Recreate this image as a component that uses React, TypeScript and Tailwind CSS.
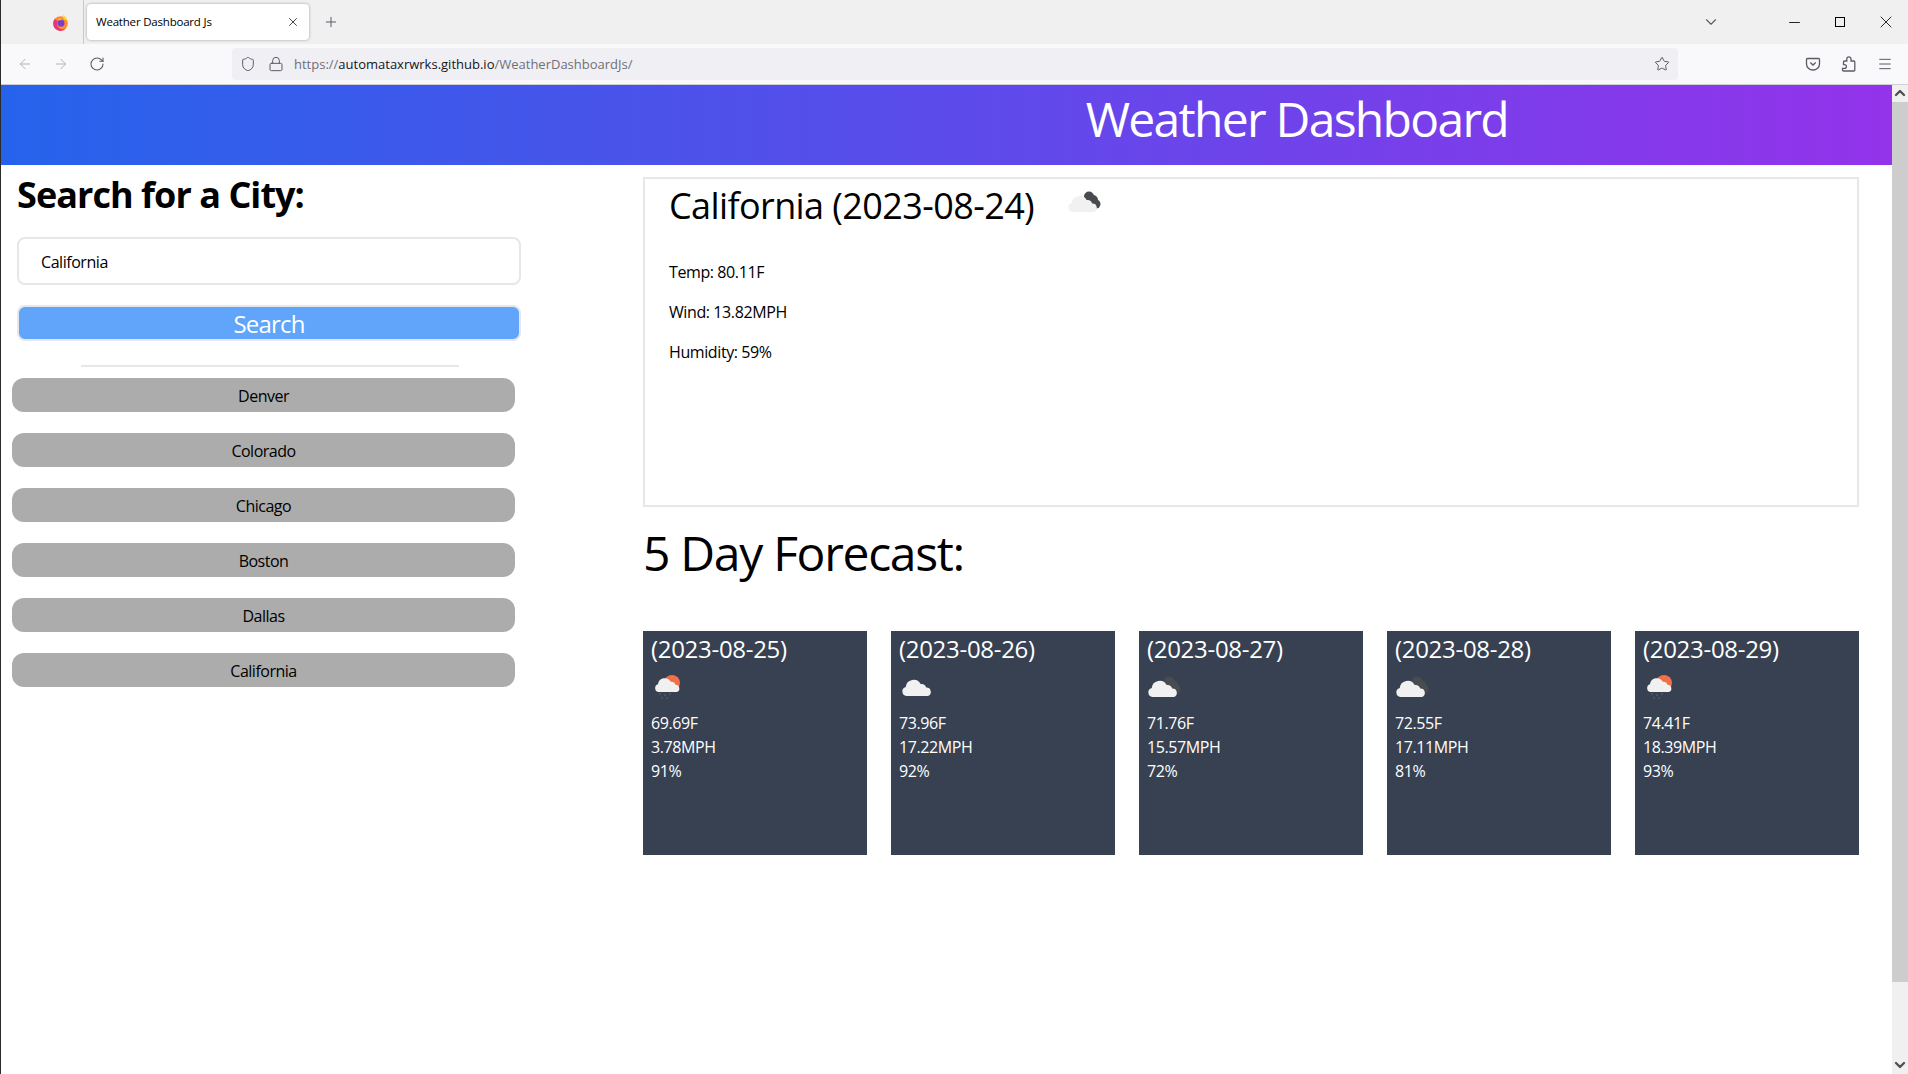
import { ArrowLeft, ArrowRight, RotateCw, Shield, Lock, Star, Menu, Plus, X, ChevronDown, ChevronUp, Minus } from "lucide-react";

const cities = ["Denver", "Colorado", "Chicago", "Boston", "Dallas", "California"];

const forecast = [
  { date: "(2023-08-25)", temp: "69.69F", wind: "3.78MPH", humidity: "91%", icon: "rain" },
  { date: "(2023-08-26)", temp: "73.96F", wind: "17.22MPH", humidity: "92%", icon: "cloud" },
  { date: "(2023-08-27)", temp: "71.76F", wind: "15.57MPH", humidity: "72%", icon: "broken" },
  { date: "(2023-08-28)", temp: "72.55F", wind: "17.11MPH", humidity: "81%", icon: "broken" },
  { date: "(2023-08-29)", temp: "74.41F", wind: "18.39MPH", humidity: "93%", icon: "rain" },
];

const cloudPath = "M5.5 32a4.6 4.6 0 0 1-.8-9 8 8 0 0 1 15-3 5 5 0 0 1 5.5 3.5 4.4 4.4 0 0 1 1.8 8.5z";

function WeatherIcon({ kind, className }: { kind: string; className?: string }) {
  return (
    <svg viewBox="0 0 50 46" className={className}>
      {kind === "rain" && <circle cx="21" cy="18" r="8" fill="#f0704a" />}
      {kind === "broken" && (
        <g fill="#4a4b50">
          <circle cx="22" cy="16.5" r="5" />
          <circle cx="26" cy="20" r="5" />
          <circle cx="29" cy="24" r="4.5" />
        </g>
      )}
      {kind === "rain" && <path d={cloudPath} fill="#f1f1f1" transform="translate(3 -.2) scale(.85)" />}
      {kind === "cloud" && <path d={cloudPath} fill="#f1f1f1" transform="translate(2 -1)" />}
      {kind === "broken" && <path d={cloudPath} fill="#f1f1f1" />}
      {kind === "rain" && (
        <g fill="#555c68">
          <circle cx="9" cy="29" r=".9" />
          <circle cx="14" cy="30" r=".9" />
          <circle cx="19" cy="29" r=".9" />
          <circle cx="11" cy="33" r=".9" />
          <circle cx="16" cy="33" r=".9" />
        </g>
      )}
    </svg>
  );
}

function FirefoxLogo() {
  return (
    <svg viewBox="0 0 17 17" className="h-[17px] w-[17px]">
      <circle cx="8.5" cy="9.5" r="7.3" fill="#ff8a2a" />
      <path d="M1.2 9.5a7.3 7.3 0 0 0 12.6 5c-3 1.6-6.6.8-8-2-1-1.8-.8-3.6 0-5.2L2.8 5A7.3 7.3 0 0 0 1.2 9.5z" fill="#e8327c" />
      <path d="M11 .4c2 1.3 3.9 3.6 4.4 6.3L11.5 5z" fill="#ffd53a" />
      <circle cx="9" cy="9.2" r="3.4" fill="#6f3fd4" />
      <path d="M5.5 5.8c1.2-1.3 3.2-1.5 4.6-.8-.8.3-1.4.9-1.7 1.6z" fill="#ffb52e" />
    </svg>
  );
}

function BrowserChrome() {
  return (
    <div className="font-['Open_Sans',sans-serif]">
      <div className="flex h-11 items-center bg-[#f0f0f0]">
        <div className="flex h-11 w-[83px] shrink-0 items-center justify-end border-r border-[#c9c9cd] pr-[14px]">
          <FirefoxLogo />
        </div>
        <div className="ml-[3px] flex h-[36px] w-[222px] items-center justify-between rounded bg-white pl-[9px] pr-[9px] shadow-[0_0_3px_rgba(0,0,0,0.35)]">
          <span className="text-[11.5px] tracking-[-0.2px] text-black">Weather Dashboard Js</span>
          <X className="h-[14px] w-[14px] text-[#2b2a33]" strokeWidth={1.5} />
        </div>
        <Plus className="ml-[14px] h-[16px] w-[16px] text-[#5b5b66]" strokeWidth={1.5} />
        <div className="flex-1" />
        <ChevronDown className="mr-[66px] h-[18px] w-[18px] text-[#5b5b66]" strokeWidth={1.5} />
        <Minus className="mr-[32px] h-[17px] w-[17px] text-black" strokeWidth={1.2} />
        <div className="mr-[31px] h-[10px] w-[10px] border border-black" />
        <X className="mr-[12px] h-[20px] w-[20px] text-black" strokeWidth={1} />
      </div>
      <div className="flex h-[41px] items-center border-b border-[#cfcfd8] bg-[#f9f9fb]">
        <ArrowLeft className="ml-[16px] h-4 w-4 text-[#b4b4ba]" strokeWidth={1.5} />
        <ArrowRight className="ml-[20px] h-4 w-4 text-[#b4b4ba]" strokeWidth={1.5} />
        <RotateCw className="ml-[20px] h-4 w-4 text-[#5b5b66]" strokeWidth={1.6} />
        <div className="ml-[127px] flex h-8 w-[1446px] items-center rounded bg-[#f0f0f4] pl-[8px] pr-[8px]">
          <Shield className="h-4 w-4 text-[#5b5b66]" strokeWidth={1.5} />
          <Lock className="ml-[12px] h-4 w-4 text-[#5b5b66]" strokeWidth={1.5} />
          <span className="ml-[10px] mt-[2px] text-[13px] text-[#6f6f78]">
            https://<span className="text-[#15141a]">automataxrwrks.github.io</span>/WeatherDashboardJs/
          </span>
          <Star className="ml-auto h-4 w-4 text-[#5b5b66]" strokeWidth={1.5} />
        </div>
        <div className="flex-1" />
        <svg viewBox="0 0 16 16" className="mr-[20px] h-4 w-4 fill-none stroke-[#5b5b66]" strokeWidth="1.3">
          <path d="M2.5 2.5h11a1 1 0 0 1 1 1V8a6.5 6 0 0 1-13 0V3.5a1 1 0 0 1 1-1z" />
          <path d="M5.3 6.5 8 9l2.7-2.5" />
        </svg>
        <svg viewBox="0 0 16 16" className="mr-[20px] h-4 w-4 fill-none stroke-[#5b5b66]" strokeWidth="1.3">
          <path d="M2.2 15h10.6a1 1 0 0 0 1-1V6a1 1 0 0 0-1-1H10V3a2.1 2.1 0 0 0-4.2 0v2H3.5a1 1 0 0 0-1 1v2.6h1a1.9 1.9 0 0 1 0 3.8h-2V14a1 1 0 0 0 .7 1z" />
        </svg>
        <Menu className="mr-[15px] h-4 w-4 text-[#5b5b66]" strokeWidth={1.5} />
      </div>
    </div>
  );
}

function Scrollbar() {
  return (
    <div className="flex w-4 shrink-0 flex-col items-center bg-[#f0f0f0]">
      <ChevronUp className="h-4 w-4 text-[#505050]" strokeWidth={3.5} />
      <div className="mt-[1px] h-[880px] w-full bg-[#cdcdcd]" />
      <div className="flex-1" />
      <ChevronDown className="mb-[1px] h-4 w-4 text-[#505050]" strokeWidth={3.5} />
    </div>
  );
}

function Sidebar() {
  return (
    <div className="w-[643px] shrink-0">
      <h2 className="ml-4 mt-[10px] h-[40px] text-[36px] font-bold leading-[40px] tracking-[-0.95px]">Search for a City:</h2>
      <div className="ml-4 mt-[22px] flex h-[48px] w-[504px] items-center rounded-lg border-2 border-[#e5e7eb] pl-[22px] pt-[1px] text-[16px] tracking-[-0.45px]">
        California
      </div>
      <button className="ml-4 mt-[20px] flex h-[36px] w-[504px] items-center justify-center rounded-lg border-2 border-[#e5e7eb] bg-[#60a5fa] pt-[1px] text-[24px] tracking-[-0.8px] text-white">
        Search
      </button>
      <div className="ml-20 mt-[24px] h-[2px] w-[378px] bg-[#e5e7eb]" />
      <div className="ml-[11px] mt-[11px] flex w-[503px] flex-col gap-[21px]">
        {cities.map((city) => (
          <button key={city} className="h-[34px] rounded-xl bg-[#acacac] text-[16px] tracking-[-0.5px] text-black">
            <span className="relative top-[0.5px]">{city}</span>
          </button>
        ))}
      </div>
    </div>
  );
}

function ForecastCard({ day }: { day: (typeof forecast)[number] }) {
  return (
    <div className="h-[224px] w-[224px] bg-[#374151] pl-2 text-white">
      <div className="pt-[2px] text-[24px] leading-[32px] tracking-[-0.3px]">{day.date}</div>
      <WeatherIcon kind={day.icon} className="h-[46px] w-[50px]" />
      <div className="text-[16px] leading-[24px] tracking-[-0.4px]">
        <p>{day.temp}</p>
        <p>{day.wind}</p>
        <p>{day.humidity}</p>
      </div>
    </div>
  );
}

export default function App() {
  return (
    <div className="flex h-[1074px] flex-col overflow-hidden border-l border-[#2b2b2b] bg-white font-['Open_Sans',sans-serif] text-black">
      <BrowserChrome />
      <div className="flex min-h-0 flex-1">
        <div className="min-w-0 flex-1">
          <header className="flex h-[80px] items-center justify-end bg-linear-to-r/srgb from-[#2563eb] to-[#9333ea] pb-[12px] pr-[384px] text-[48px] tracking-[-1.7px] text-white">
            Weather Dashboard
          </header>
          <div className="flex">
            <Sidebar />
            <main className="min-w-0 flex-1">
              <section className="ml-[-1px] mt-[12px] h-[330px] w-[1216px] border-2 border-[#e5e7eb] pl-[24px]">
                <div className="flex items-start">
                  <h2 className="pt-[2px] text-[36px] leading-[50px] tracking-[-0.6px]">California (2023-08-24)</h2>
                  <WeatherIcon kind="broken" className="ml-[33px] mt-[1px] h-[46px] w-[50px]" />
                </div>
                <div className="mt-[29px] flex flex-col gap-4 text-[16px] leading-[24px] tracking-[-0.4px]">
                  <p>Temp: 80.11F</p>
                  <p>Wind: 13.82MPH</p>
                  <p>Humidity: 59%</p>
                </div>
              </section>
              <h2 className="ml-[-1px] mt-[12px] text-[48px] leading-[68px] tracking-[-1.3px]">5 Day Forecast:</h2>
              <div className="ml-[-1px] mt-[44px] flex gap-6">
                {forecast.map((day) => (
                  <ForecastCard key={day.date} day={day} />
                ))}
              </div>
            </main>
          </div>
        </div>
        <Scrollbar />
      </div>
    </div>
  );
}
